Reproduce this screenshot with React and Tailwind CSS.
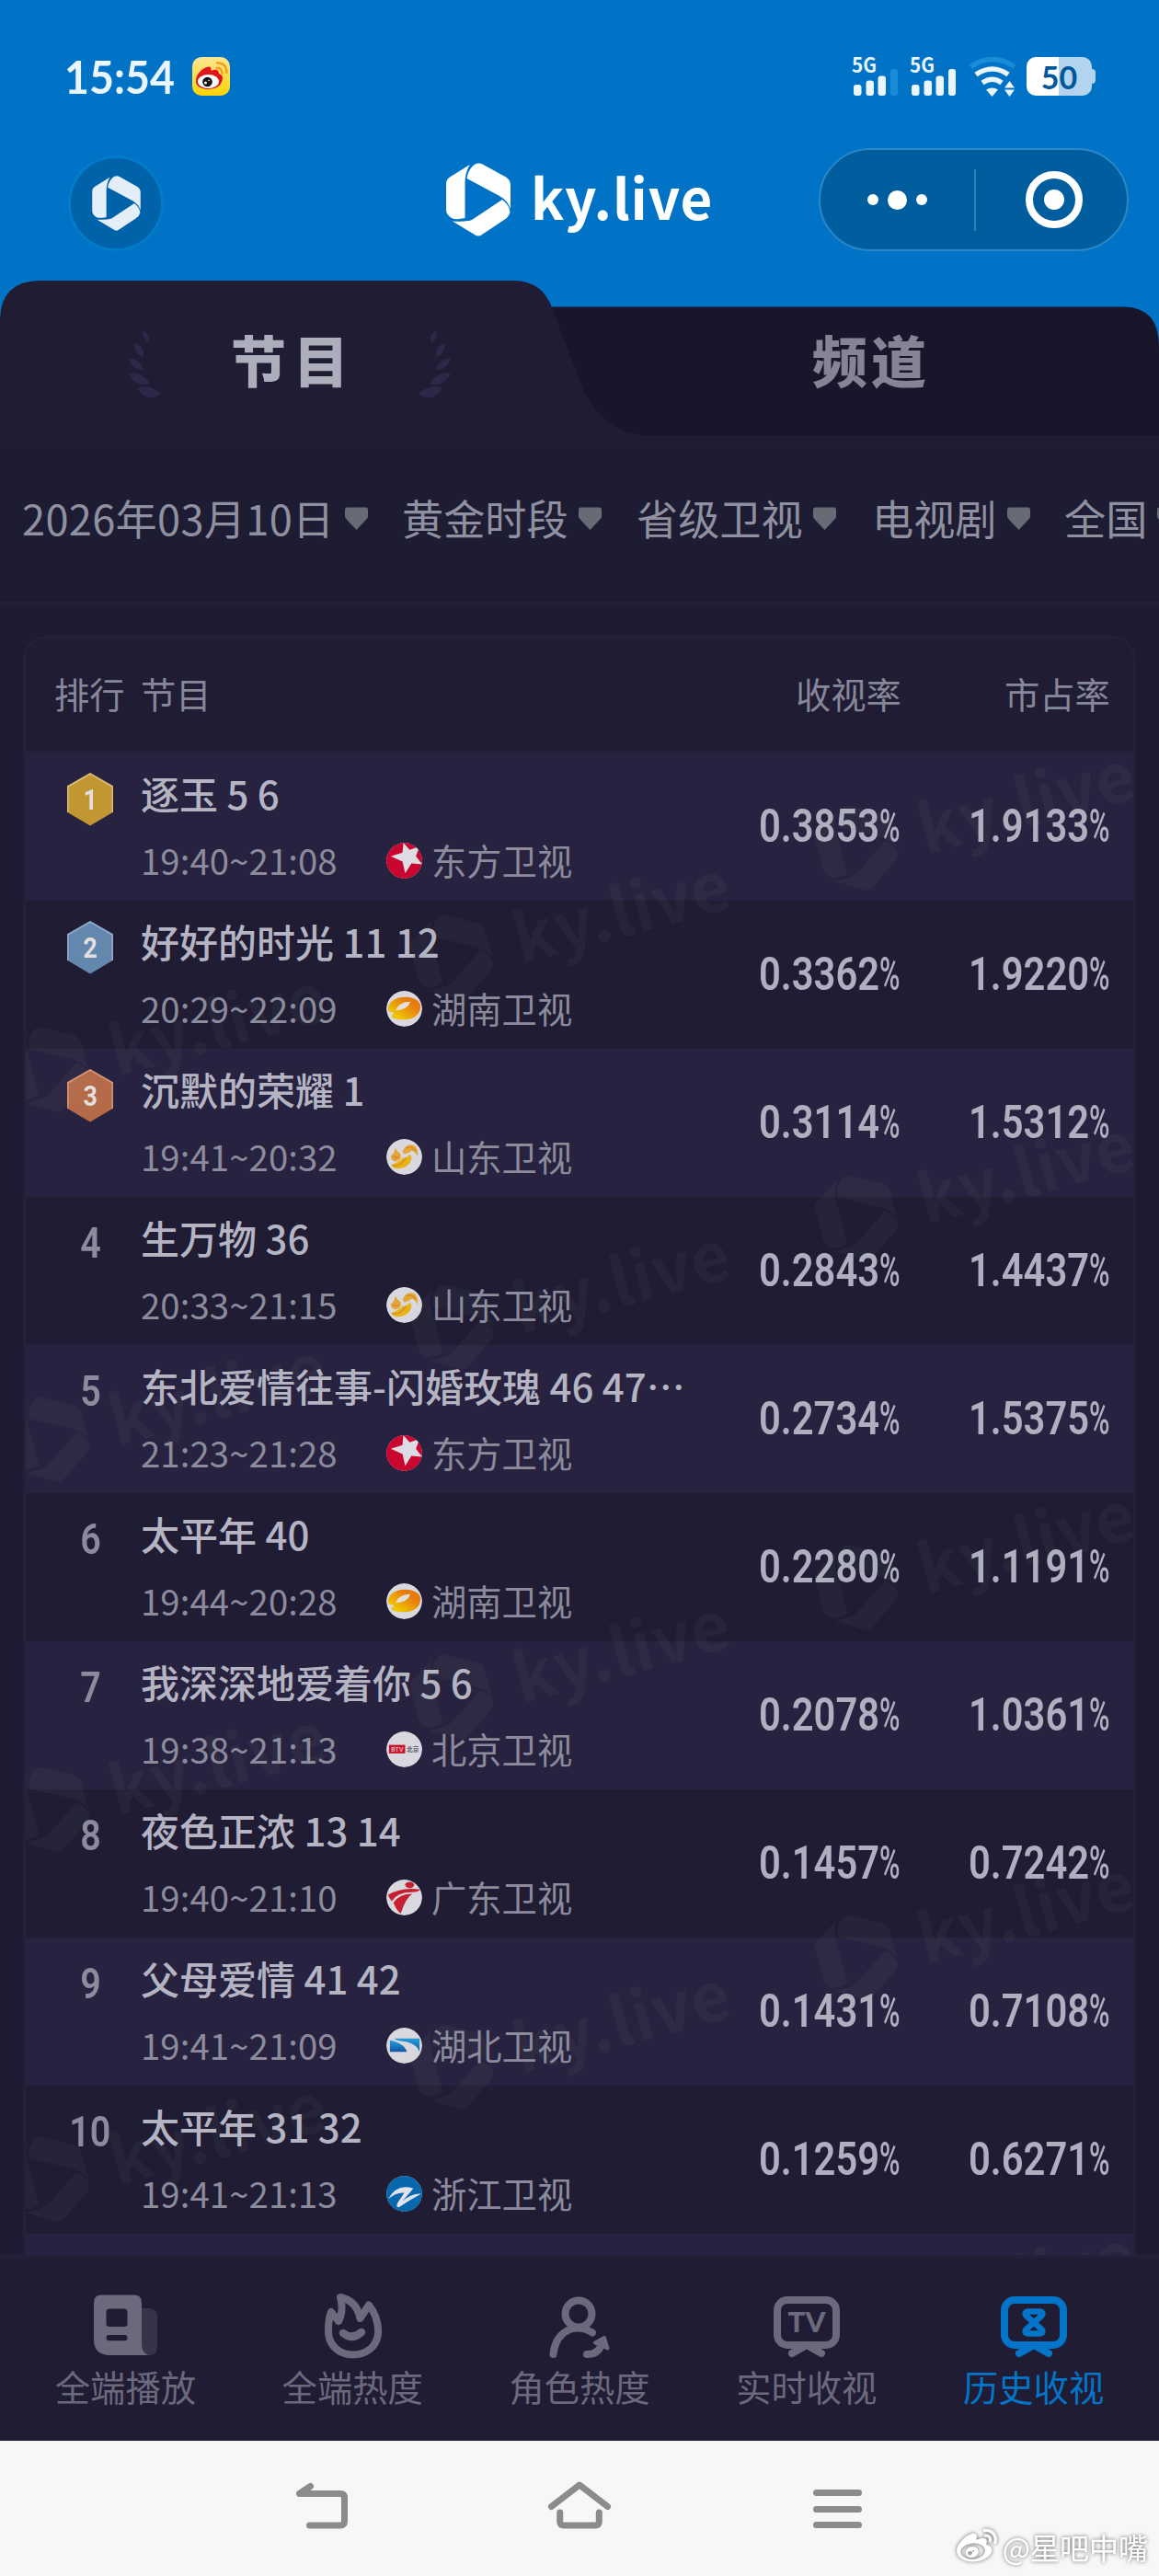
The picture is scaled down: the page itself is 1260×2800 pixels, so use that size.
import React from "react";
import { FaWeibo } from "react-icons/fa";

const programs = [
  { rank: 1, title: "逐玉 5 6", time: "19:40~21:08", channel: "东方卫视", rate: "0.3853", share: "1.9133" },
  { rank: 2, title: "好好的时光 11 12", time: "20:29~22:09", channel: "湖南卫视", rate: "0.3362", share: "1.9220" },
  { rank: 3, title: "沉默的荣耀 1", time: "19:41~20:32", channel: "山东卫视", rate: "0.3114", share: "1.5312" },
  { rank: 4, title: "生万物 36", time: "20:33~21:15", channel: "山东卫视", rate: "0.2843", share: "1.4437" },
  { rank: 5, title: "东北爱情往事-闪婚玫瑰 46 47⋯", time: "21:23~21:28", channel: "东方卫视", rate: "0.2734", share: "1.5375" },
  { rank: 6, title: "太平年 40", time: "19:44~20:28", channel: "湖南卫视", rate: "0.2280", share: "1.1191" },
  { rank: 7, title: "我深深地爱着你 5 6", time: "19:38~21:13", channel: "北京卫视", rate: "0.2078", share: "1.0361" },
  { rank: 8, title: "夜色正浓 13 14", time: "19:40~21:10", channel: "广东卫视", rate: "0.1457", share: "0.7242" },
  { rank: 9, title: "父母爱情 41 42", time: "19:41~21:09", channel: "湖北卫视", rate: "0.1431", share: "0.7108" },
  { rank: 10, title: "太平年 31 32", time: "19:41~21:13", channel: "浙江卫视", rate: "0.1259", share: "0.6271" },
];

const badgeColors = {
  1: { fill: "#c19732", edge: "#d8bd72" },
  2: { fill: "#6488ad", edge: "#92aac8" },
  3: { fill: "#b56a49", edge: "#d59474" },
};

// left / top of each watermark inside the list body
const watermarks = [
  [914, 69], [474, 188], [35, 310],
  [914, 471], [474, 590], [35, 712],
  [914, 873], [474, 992], [35, 1114],
  [914, 1275], [474, 1394], [35, 1516],
  [914, 1677],
];

const Logo = ({ className }) => (
  <svg viewBox="0 0 70 80" className={className} fill="currentColor">
    <path d="M0 23Q0 18 4 15.500L26 2Q20.500 10 20.500 22V60Q12 62 7 60.500Q0 57 0 51Z" />
    <path d="M22.500 17Q24 7 31 1.800Q35.500-1 40 1.800L65 15.500Q70 18.500 70 24V50Q67 41 58 36Z" />
    <path d="M61 40Q69 46 69.500 54Q68 59 63 62L39 78Q35 81 31 78L7 63.500Q21 64.500 28 62Z" />
  </svg>
);

const SignalIcon = ({ weak }) => (
  <svg width="51" height="44" viewBox="0 0 51 44" fill="#eaf5fd" className="overflow-visible">
    <text x="0" y="16.500" fontSize="22" fontWeight="700" textLength="27" lengthAdjust="spacingAndGlyphs">5G</text>
    <rect x="2" y="30" width="8.500" height="12" rx="3" />
    <rect x="15.500" y="25.500" width="8.500" height="16.500" rx="3" />
    <rect x="28.500" y="20.500" width="8.500" height="21.500" rx="3" />
    <rect x="42" y="13" width="8" height="29" rx="3" fill={weak ? "#1a8bd6" : "#eaf5fd"} />
  </svg>
);

const WifiIcon = () => (
  <svg width="52" height="44" viewBox="0 0 52 44" fill="none" strokeWidth="5.500">
    <path d="M2 10.500Q26-5.500 50 10.500" stroke="#1a8bd6" />
    <path d="M8 19Q26 7 43 19" stroke="#eaf5fd" />
    <path d="M15 28Q26 20.500 36 28" stroke="#eaf5fd" />
    <path d="M19 35.500Q25.500 31.500 32 35.500L25.500 43Z" fill="#eaf5fd" />
    <path d="M44.500 26L50 33.500H39ZM44.500 43L50 35.500H39Z" fill="#eaf5fd" />
  </svg>
);

const WeiboAppIcon = () => (
  <svg width="41" height="42" viewBox="0 0 41 42">
    <defs>
      <linearGradient id="app" x1="0" y1="0" x2="0" y2="1">
        <stop offset="0" stopColor="#fbe694" />
        <stop offset="1" stopColor="#ffd404" />
      </linearGradient>
    </defs>
    <rect width="41" height="42" rx="10" fill="url(#app)" />
    <path d="M4 26C4 18 12 11 18 10.500C21 10.500 20.500 14 20.500 15C24 13 29 13 29 18C35 20 33 25 31 29C27 35 17 36 11 34C6 32 4 30 4 26Z" fill="#e0141c" />
    <ellipse cx="17.500" cy="26.500" rx="11.500" ry="7.500" fill="#fff" />
    <circle cx="16.500" cy="27" r="5.300" fill="#111" />
    <circle cx="14.500" cy="28" r="1.500" fill="#fff" />
    <circle cx="18" cy="25.500" r=".8" fill="#fff" />
    <path d="M27 6.500Q37 6 37.500 17M26.500 12Q32 11.500 32.500 17.500" fill="none" stroke="#f79a1c" strokeWidth="2.400" strokeLinecap="round" />
  </svg>
);

const StatusBar = () => (
  <div className="flex h-[161px] items-start justify-between pt-[62px] pr-[69px] pl-[70px]">
    <div className="flex items-center">
      <span className="w-[139px] origin-left scale-x-[0.95] font-['Lato',sans-serif] text-[49px] leading-[42px] font-bold text-[#eaf5fd]">
        15:54
      </span>
      <WeiboAppIcon />
    </div>
    <div className="flex items-start">
      <SignalIcon weak />
      <div className="w-3"></div>
      <SignalIcon />
      <div className="w-[13px]"></div>
      <WifiIcon />
      <div className="ml-[11px] flex items-center">
        <div className="flex h-[42px] w-[71px] items-center justify-center rounded-[10px] bg-linear-to-r from-white from-49% to-[#b3d4ef] to-49% font-['Lato',sans-serif] text-[34px] font-bold text-[#00589b]">
          50
        </div>
        <div className="h-4 w-1 rounded-r bg-[#b3d4ef]"></div>
      </div>
    </div>
  </div>
);

const Header = () => (
  <div className="flex h-[144px] items-start">
    <div className="mt-2 ml-[74px] flex h-[104px] w-[104px] items-center justify-center rounded-full border-[3px] border-[#007cc9] bg-[#0062a8]">
      <Logo className="h-[60px] w-[53px] text-[#e4eef8]" />
    </div>
    <div className="mt-4 ml-[307px] flex items-start text-white">
      <Logo className="h-20 w-[70px]" />
      <span className="ml-[22px] w-[313px] text-[60px] leading-[71px] font-bold tracking-[0.8px]">ky.live</span>
    </div>
    <div className="flex h-28 w-[337px] items-center rounded-full border-2 border-[#2b88c8] bg-[#005d9e]">
      <div className="flex w-[167px] items-center justify-center gap-[10px]">
        <div className="h-3 w-3 rounded-full bg-white"></div>
        <div className="h-[21px] w-[21px] rounded-full bg-white"></div>
        <div className="h-3 w-3 rounded-full bg-white"></div>
      </div>
      <div className="h-[67px] w-[2px] bg-[#2f80b8]"></div>
      <div className="ml-[54px] flex h-[62px] w-[62px] items-center justify-center rounded-full border-[8px] border-white">
        <div className="h-[22px] w-[22px] rounded-full bg-white"></div>
      </div>
    </div>
  </div>
);

const Laurel = ({ flip }) => (
  <svg width="35" height="76" viewBox="0 0 35 76" fill="#2b2947" className={flip ? "-scale-x-100" : ""}>
    <path d="M16 1Q25 7 21 15Q13 9 16 1Z" />
    <path d="M6 15Q18 18 16 30Q6 28 6 15Z" />
    <path d="M0 31Q13 32 16 44Q3 44 0 31Z" />
    <path d="M0 48Q15 45 23 59Q8 64 0 48Z" />
    <path d="M9 64Q22 58 35 70Q20 81 9 64Z" />
  </svg>
);

const Tabs = () => (
  <div className="relative flex h-[180px]">
    <svg className="absolute inset-0" width="1260" height="180" viewBox="0 0 1260 180">
      <path d="M540 28.500H1222Q1260 29 1260 72V180H540Z" fill="#19162b" />
      <path d="M0 42Q1 1 42 0H560Q591 1 601 32L630 108Q652 168 708 168.500H1260V180H0Z" fill="#1f1c33" />
    </svg>
    <div className="relative flex w-[630px] justify-between pt-[53px] pr-[140px] pl-[140px]">
      <Laurel />
      <span className="-mr-2 text-[60px] leading-[64px] font-black tracking-[8px] text-[#adaebc]">节目</span>
      <Laurel flip />
    </div>
    <div className="relative w-[630px] pt-[53px] pl-1 text-center text-[60px] leading-[64px] font-black tracking-[4px] text-[#858494]">
      频道
    </div>
  </div>
);

const Filter = ({ text, className }) => (
  <div className={`flex shrink-0 items-center ${className}`}>
    <span className="whitespace-nowrap">{text}</span>
    <svg className="ml-[11px]" width="25" height="25" viewBox="0 0 25 25">
      <path d="M2 .5H23Q25 .5 25 3V11Q24 13 21 16L12.500 25L4 16Q1 13 0 11V3Q0 .5 2 .5Z" fill="#676b76" />
    </svg>
  </div>
);

const Filters = () => (
  <div className="flex h-[172px] items-start overflow-hidden border-b-[3px] border-[#222138] pt-[44px] pl-6 text-[45.200px] leading-[68px] text-[#8f90a0]">
    <Filter text="2026年03月10日" className="w-[413px] tracking-[0.3px]" />
    <Filter text="黄金时段" className="w-[255px]" />
    <Filter text="省级卫视" className="w-[256px]" />
    <Filter text="电视剧" className="w-[209px]" />
    <Filter text="全国" className="w-[130px]" />
  </div>
);

const ChannelIcon = ({ name }) => (
  <svg width="39" height="39" viewBox="0 0 40 40" className="rounded-full">
    <circle cx="20" cy="20" r="20" fill="#d9d8df" />
    {name === "东方卫视" && (
      <>
        <circle cx="20" cy="20" r="20" fill="#c8062f" />
        <path d="M19 0L26 8L37 4L33 15L40 24L28 23L21 34L18 21L5 15L18 11Z" fill="#dddce4" />
      </>
    )}
    {name === "湖南卫视" && (
      <>
        <defs>
          <linearGradient id="mango" x1="0" y1="1" x2="1" y2="0">
            <stop offset="0.200" stopColor="#efc500" />
            <stop offset="0.700" stopColor="#e87b10" />
          </linearGradient>
        </defs>
        <path d="M2 20C2 11 13 6 23 7C34 8 39 13 38 19C37 28 29 32 20 32C13 32 7 31 6 29C6 26 9 25 8 24C4 24 2 23 2 20Z" fill="url(#mango)" />
        <path d="M10 22Q14 12 27 12Q24 21 10 22Z" fill="#e4dfd8" />
      </>
    )}
    {name === "山东卫视" && (
      <>
        <path d="M10 10Q9 16 5 19Q5 24 10 25Q17 24 16 17Q12 14 10 10Z" fill="#e3a536" />
        <path d="M5 29Q14 26 18 21Q23 22 26 17Q30 21 26 27Q20 34 11 33Q7 32 5 29Z" fill="#e6b416" />
        <path d="M18 14Q22 4 31 7Q36 11 35 20Q32 13 28 13Q25 16 20 17Z" fill="#e3a833" />
        <path d="M7 30Q17 30 22 21M8 19Q10 22 14 20M22 10Q29 7 33 14" fill="none" stroke="#d98330" strokeWidth="1.300" />
      </>
    )}
    {name === "北京卫视" && (
      <>
        <rect x="3" y="15" width="18" height="9.500" fill="#c9142c" />
        <text x="5.500" y="22.500" fontSize="7" fontWeight="700" fill="#e3b0b8" fontFamily="Roboto, sans-serif">BTV</text>
        <text x="22.500" y="22.500" fontSize="7" fontWeight="700" fill="#5b5b66">北京</text>
      </>
    )}
    {name === "广东卫视" && (
      <g fill="#c81f30">
        <ellipse cx="26" cy="6" rx="5" ry="3.500" />
        <path d="M2 17Q17 8 38 11Q36 14 28 14Q12 14 6 24Q3 21 2 17Z" />
        <path d="M8 26Q14 16 29 16Q22 20 16 38Q11 34 8 26Z" />
      </g>
    )}
    {name === "湖北卫视" && (
      <>
        <defs>
          <linearGradient id="lake" x1="0" y1="0" x2="0" y2="1">
            <stop offset="0" stopColor="#269edb" />
            <stop offset="1" stopColor="#1256a2" />
          </linearGradient>
        </defs>
        <path d="M9 12H37V27Q34 17 18 15Q10 14 9 12Z" fill="url(#lake)" />
        <path d="M4 14Q20 17 23 27H4Z" fill="url(#lake)" />
      </>
    )}
    {name === "浙江卫视" && (
      <>
        <circle cx="20" cy="20" r="20" fill="#0768ad" />
        <path d="M2 26Q12 8 30 14Q27 18 18 28Q29 19 39 20Q26 27 14 35Q9 35 14 28L20 19Q11 18 2 26Z" fill="#dfe3ec" />
      </>
    )}
  </svg>
);

const Badge = ({ rank }) => (
  <div className="relative flex h-[58px] w-[50px] items-center justify-center font-['Roboto',sans-serif] text-[32px] font-bold text-[#e3dfdf]">
    <svg className="absolute inset-0" width="50" height="58" viewBox="0 0 50 58">
      <path d="M25 .5L49.500 15V43L25 57.500L.5 43V15Z" fill={badgeColors[rank].fill} />
      <path d="M.7 43V15L25 1L49.300 15V43" fill="none" stroke={badgeColors[rank].edge} strokeWidth="1.800" />
    </svg>
    <span className="relative scale-x-[0.84]">{rank}</span>
  </div>
);

const Percent = ({ value, className }) => (
  <div className={`flex h-full items-center font-['Roboto',sans-serif] text-[50px] font-semibold text-[#afafbf] ${className}`}>
    <span className="w-[131px] origin-left scale-x-[0.835]">{value}</span>
    <span className="w-[22px] origin-left scale-x-[0.61] font-medium">%</span>
  </div>
);

const Row = ({ item }) => (
  <div className={`flex h-[161px] shrink-0 ${item.rank % 2 ? "bg-[#27223f]" : "bg-[#1f1c33]"}`}>
    <div className="flex w-[125px] justify-center pt-[22px] pl-[15px]">
      {item.rank <= 3 ? (
        <Badge rank={item.rank} />
      ) : (
        <span className="scale-x-[0.84] font-['Roboto',sans-serif] text-[47px] leading-[56px] font-semibold text-[#8b8b9c]">
          {item.rank}
        </span>
      )}
    </div>
    <div className="w-[644px] pt-[14px]">
      <div className="text-[42px] leading-[60px] font-medium whitespace-nowrap text-[#b4b4c3]">{item.title}</div>
      <div className="mt-[15px] flex items-center text-[38.300px] leading-[56px] text-[#8b8b9c]">
        <span className="w-[267px] tracking-[0.100px]">{item.time}</span>
        <ChannelIcon name={item.channel} />
        <span className="ml-[10px]">{item.channel}</span>
      </div>
    </div>
    <Percent value={item.rate} className="ml-[28px]" />
    <Percent value={item.share} className="ml-[75px]" />
  </div>
);

const RankTable = () => (
  <div className="mx-[25px] mt-[34px] flex h-[1760px] flex-col overflow-hidden rounded-t-[26px] border-x-[3px] border-t-[3px] border-[#222139] bg-[#1f1c33]">
    <div className="flex h-[124px] shrink-0 items-center border-b-[3px] border-[#222139] pb-[2px] text-[38.300px] text-[#87879a]">
      <span className="ml-[31px] w-[94px]">排行</span>
      <span className="w-[712px]">节目</span>
      <span className="w-[227px]">收视率</span>
      <span>市占率</span>
    </div>
    <div className="relative flex h-[1633px] flex-col overflow-hidden">
      {programs.map((item) => (
        <Row key={item.rank} item={item} />
      ))}
      <div className="h-[161px] shrink-0 bg-[#27223f]"></div>
      {watermarks.map(([left, top]) => (
        <div
          key={`${left}-${top}`}
          className="absolute h-0 w-0 text-[#b8c4b8]/[0.05]"
          style={{ left: left - 10, top: top + 35 }}
        >
          {/* anchored on the centre of the mark */}
          <div className="flex h-[96px] w-[350px] origin-[42px_48px] -translate-x-[42px] -translate-y-[48px] rotate-[-15deg] items-start">
            <Logo className="h-[96px] w-[84px] shrink-0" />
            <span className="ml-7 text-[73px] leading-[84px] font-bold tracking-[1px]">ky.live</span>
          </div>
        </div>
      ))}
    </div>
  </div>
);

const navItems = [
  {
    label: "全端播放",
    icon: (
      <>
        <path d="M54 17H62Q71 17 71 27V59Q71 68 62 68H50Z" fill="#37344a" />
        <path d="M10 2.500H46Q54 2.500 54 11V56Q54 66 62 68H18Q2 67 2 51V11Q2 2.500 10 2.500ZM19 17.500Q15.500 17.500 15.500 21V34Q15.500 37 19 37H35Q38.500 37 38.500 34V21Q38.500 17.500 35 17.500ZM18.500 46Q15.500 46 15.500 49T18.500 52.300H35.500Q38.500 52.300 38.500 49T35.500 46Z" fill="currentColor" />
      </>
    ),
  },
  {
    label: "全端热度",
    icon: (
      <>
        <path d="M23 5Q41 9 44.500 28L54 13.500Q65 27 64 45C62 60 50 67.500 36.500 67.500C22 67.500 9 57 10 40Q10 29 13 21L21 31Q27 20 23 5Z" />
        <path d="M26 44Q36 52 46 43" strokeWidth="8.500" />
      </>
    ),
  },
  {
    label: "角色热度",
    icon: (
      <>
        <circle cx="35" cy="23" r="14.500" />
        <path d="M7.500 67Q10 44 29 39Q40 37 50 43.500" />
        <path d="M44 67Q55 68 60 57" />
        <path d="M63 49L53 54.500L66.500 60.500Z" fill="currentColor" strokeWidth="4" />
      </>
    ),
  },
  {
    label: "实时收视",
    icon: (
      <>
        <rect x="4" y="8" width="64" height="49" rx="11" />
        <path d="M36 57L20 66M36 57L52 66" />
        <text x="15.500" y="43" fontSize="31" fontWeight="900" fontFamily="Lato, sans-serif" fill="currentColor" stroke="none" textLength="41" lengthAdjust="spacingAndGlyphs">TV</text>
      </>
    ),
  },
  {
    label: "历史收视",
    active: true,
    icon: (
      <>
        <rect x="4" y="8" width="64" height="49" rx="11" />
        <path d="M36 57L20 66M36 57L52 66" />
        <path d="M29 20.500H43Q47 21.500 44.500 25L36 32.500L27.500 40Q25 43.500 29 44.500H43Q47 43.500 44.500 40L36 32.500L27.500 25Q25 21.500 29 20.500Z" strokeWidth="6.500" />
      </>
    ),
  },
];

const BottomNav = () => (
  <div className="flex h-[202px] border-t-[3px] border-[#222139] bg-[#1f1c33] px-[13px]">
    {navItems.map((item) => (
      <div
        key={item.label}
        className={`flex flex-1 flex-col items-center pt-[38px] ${item.active ? "text-[#0474c8]" : "text-[#6b697b]"}`}
      >
        <svg width="72" height="72" viewBox="0 0 72 72" fill="none" stroke={item.label === "全端播放" ? "none" : "currentColor"} strokeWidth="8" strokeLinecap="round" strokeLinejoin="round">
          {item.icon}
        </svg>
        <span className="mt-[2px] text-[38.300px] leading-[56px]">{item.label}</span>
      </div>
    ))}
  </div>
);

const SystemBar = () => (
  <div className="relative flex h-[147px] items-start bg-[#f7f7f7] pt-[44px]">
    <svg className="ml-[320px]" width="60" height="54" viewBox="0 0 60 54" fill="none" stroke="#8b8b8b" strokeWidth="7" strokeLinecap="round" strokeLinejoin="round">
      <path d="M17.500 5.500L5.500 13.500H50Q54.500 13.500 54.500 18V43Q54.500 48 50 48H16.500" />
    </svg>
    <svg className="ml-[215px]" width="70" height="54" viewBox="0 0 70 54" fill="none" stroke="#8b8b8b" strokeWidth="7" strokeLinecap="round" strokeLinejoin="round">
      <path d="M4.500 27.500L35 4L65.500 27.500M13.700 34V44Q14 48 18 48H52Q56 48 56.300 44V34" />
    </svg>
    <div className="mt-[9px] ml-[219px] flex flex-col gap-[10.500px]">
      <div className="h-[7px] w-[53px] rounded-full bg-[#8b8b8b]"></div>
      <div className="h-[7px] w-[53px] rounded-full bg-[#8b8b8b]"></div>
      <div className="h-[7px] w-[53px] rounded-full bg-[#8b8b8b]"></div>
    </div>
    <div className="absolute right-3 bottom-[8px] flex items-center text-white drop-shadow-[0_0_2px_rgba(0,0,0,0.6)]">
      <FaWeibo className="mr-[6px] h-[44px] w-[44px]" />
      <span className="text-[32px] leading-[48px]">@星吧中嘴</span>
    </div>
  </div>
);

const App = () => {
  return (
    <div
      lang="zh-CN"
      className="flex h-[2800px] w-[1260px] flex-col overflow-hidden bg-[#0073c7] font-['Noto_Sans_CJK_SC',sans-serif]"
    >
      <StatusBar />
      <Header />
      <Tabs />
      <div className="bg-[#1e1c32]">
        <Filters />
        <RankTable />
      </div>
      <BottomNav />
      <SystemBar />
    </div>
  );
};

export default App;
